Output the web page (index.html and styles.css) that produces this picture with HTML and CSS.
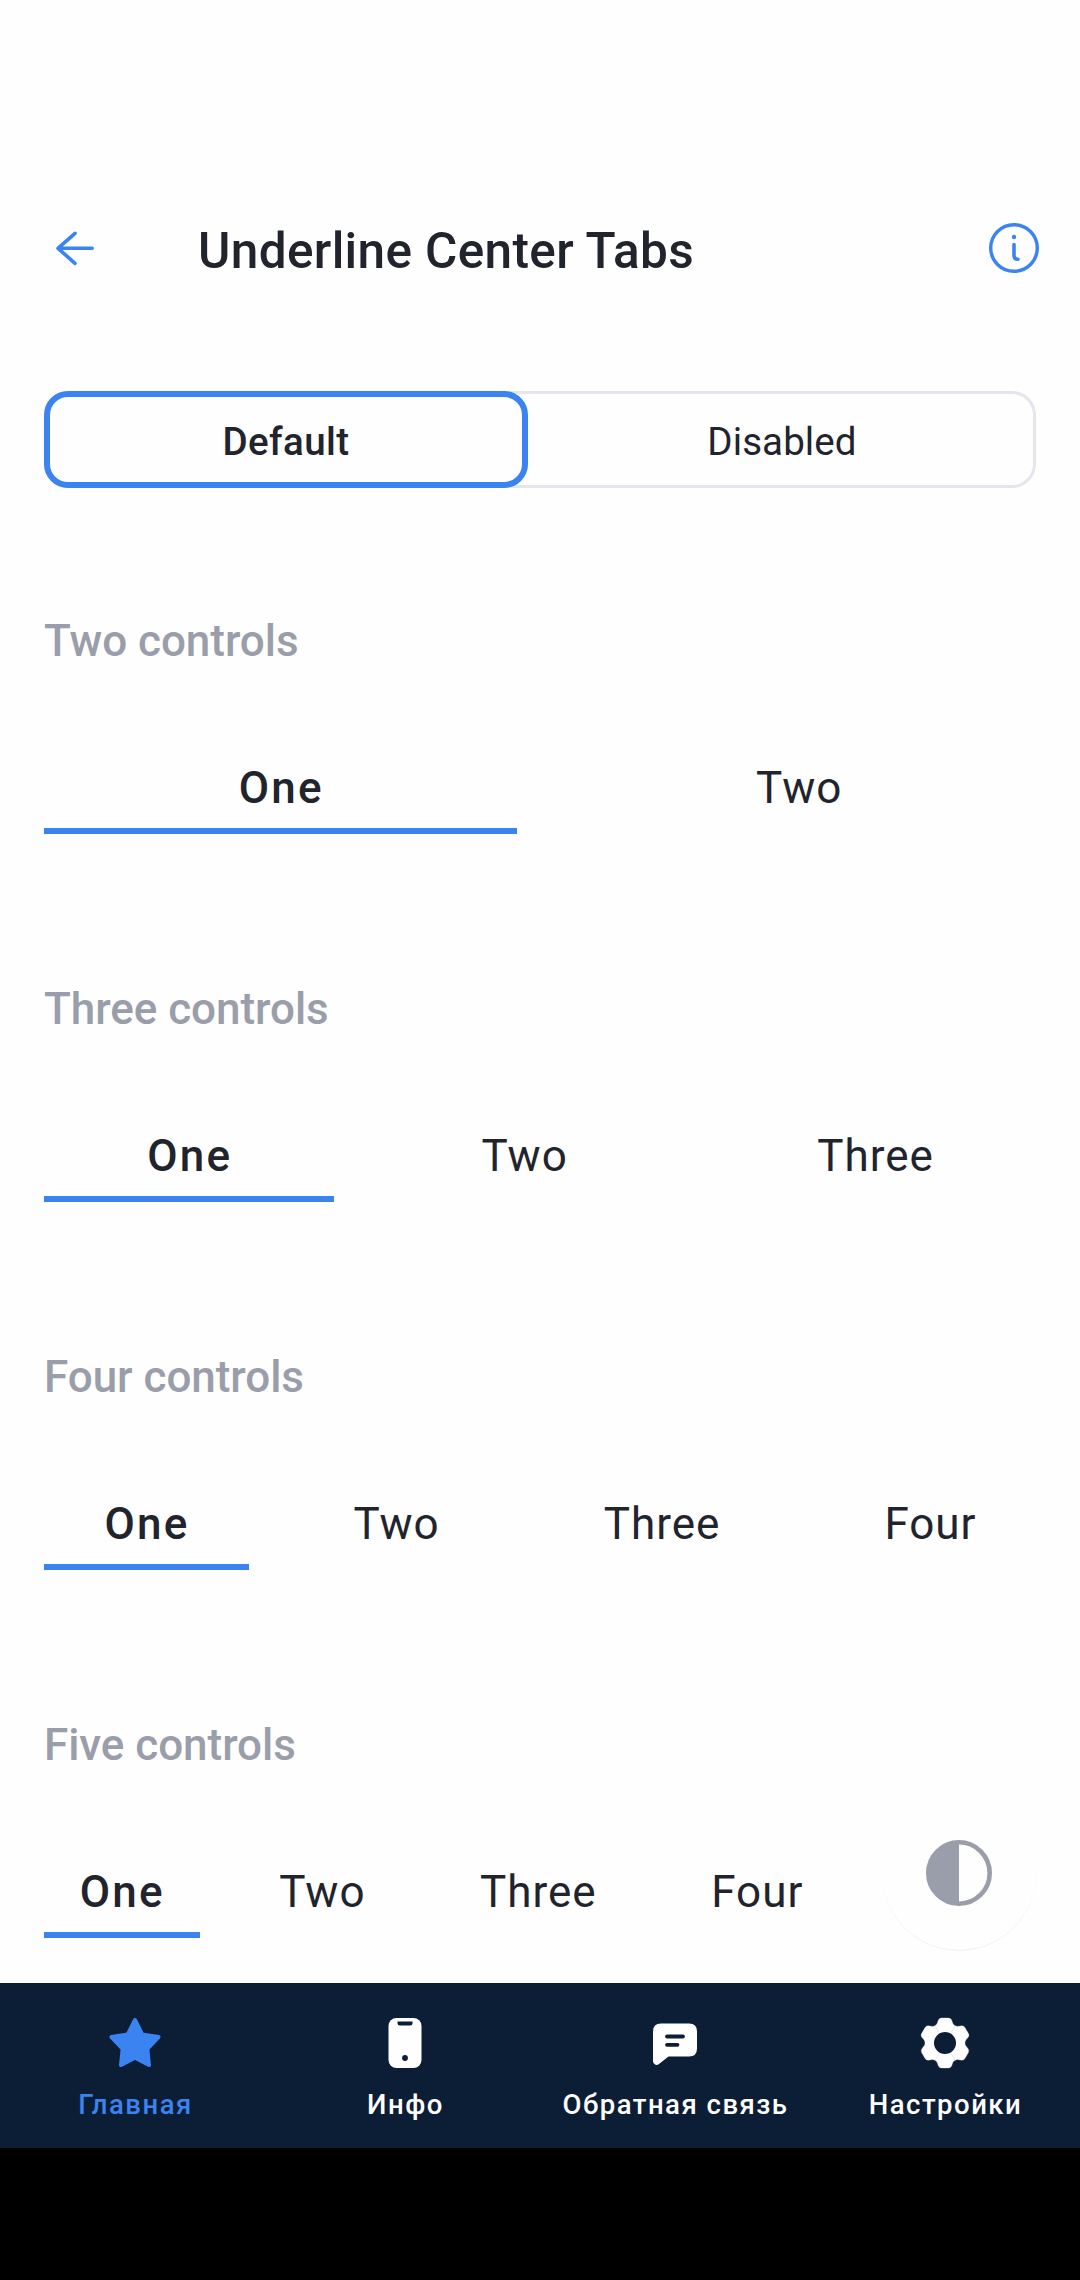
FILE: index.html
```html
<!DOCTYPE html>
<html lang="ru">
<head>
<meta charset="utf-8">
<title>Underline Center Tabs</title>
<link rel="stylesheet" href="styles.css">
</head>
<body>
<div class="screen">
  <header class="header">
    <svg class="back" viewBox="0 0 66 66"><path d="M50.200 33.300H17M33 18.300L16 33.300l17 15"/></svg>
    <h1 class="title">Underline Center Tabs</h1>
    <svg class="info" viewBox="0 0 66 66"><circle class="ring" cx="33" cy="33" r="23.300"/><circle class="dot" cx="33" cy="22" r="2.200"/><path d="M33 29.500V40.500Q33 44.200 37 44.200"/></svg>
  </header>
  <main class="content">
    <div class="segments">
      <div class="segment selected">Default</div>
      <div class="segment">Disabled</div>
    </div>
    <section class="group">
      <h2 class="caption">Two controls</h2>
      <div class="tabs"><div class="tab active">One</div><div class="tab">Two</div></div>
    </section>
    <section class="group">
      <h2 class="caption">Three controls</h2>
      <div class="tabs"><div class="tab active">One</div><div class="tab">Two</div><div class="tab">Three</div></div>
    </section>
    <section class="group">
      <h2 class="caption">Four controls</h2>
      <div class="tabs"><div class="tab active">One</div><div class="tab">Two</div><div class="tab">Three</div><div class="tab">Four</div></div>
    </section>
    <section class="group">
      <h2 class="caption">Five controls</h2>
      <div class="tabs"><div class="tab active">One</div><div class="tab">Two</div><div class="tab">Three</div><div class="tab">Four</div><div class="tab">Five</div></div>
    </section>
    <div class="theme">
      <svg class="theme-icon" viewBox="0 0 66 66"><circle cx="33" cy="33" r="30.700"/><path d="M33 2A31 31 0 0 0 33 64Z"/></svg>
    </div>
  </main>
  <nav class="nav">
    <div class="item current">
      <svg class="icon" viewBox="0 0 66 66"><path class="star" d="M33 10L40.200 24.500L56.500 27L45.300 38.800L47 55L33 47.700L19 55L20.700 38.800L9.500 27L25.800 24.500Z"/></svg>
      <span class="label">Главная</span>
    </div>
    <div class="item">
      <svg class="icon" viewBox="0 0 66 66"><rect x="16.500" y="8" width="33" height="50" rx="8"/><path class="hole" d="M25.500 11.500H40.500V13Q40.500 15.500 38 15.500H28Q25.500 15.500 25.500 13Z"/><circle class="hole" cx="33" cy="48" r="2.900"/></svg>
      <span class="label">Инфо</span>
    </div>
    <div class="item">
      <svg class="icon" viewBox="0 0 66 66"><path d="M19 13.500H47Q55 13.500 55 21.500V38.500Q55 46.500 47 46.500H26.500L17 54Q15 55.500 13 54.500Q11 53.500 11 51V21.500Q11 13.500 19 13.500Z"/><path class="line" d="M25 26.500H41M25 34.800H35.500"/></svg>
      <span class="label">Обратная связь</span>
    </div>
    <div class="item">
      <svg class="icon" viewBox="-33 -33 66 66">
        <defs><path id="tooth" d="M0 0L-10-17.300C-8-18.500-7.600-20-7-22Q-6-25-3.500-25H3.500Q6-25 7-22C7.600-20 8-18.500 10-17.300Z"/></defs>
        <g class="gear"><use href="#tooth"/><use href="#tooth" transform="rotate(60)"/><use href="#tooth" transform="rotate(120)"/><use href="#tooth" transform="rotate(180)"/><use href="#tooth" transform="rotate(240)"/><use href="#tooth" transform="rotate(300)"/></g>
        <circle class="hole" r="11"/>
      </svg>
      <span class="label">Настройки</span>
    </div>
  </nav>
  <div class="system"></div>
</div>
</body>
</html>
```
FILE: styles.css
```css
* { box-sizing: border-box; }
body { margin: 0; background: #fefefe; font-family: Roboto, sans-serif; color: #21242d; }
svg { display: block; flex: none; }
.screen { width: 1080px; height: 2280px; display: flex; flex-direction: column; overflow: hidden; }
.header { height: 314px; padding: 182px 33px 0 42px; display: flex; align-items: center; flex: none; }
.back, .info { width: 66px; height: 66px; fill: none; stroke: #3a83f1; stroke-width: 3.6px; stroke-linecap: round; stroke-linejoin: round; }
.back { margin-right: 90px; }
.info { margin-left: auto; }
.info .ring { stroke-width: 3.4px; }
.info .dot { fill: #3a83f1; stroke: none; }
.title { margin: 0; padding-top: 6px; font-size: 49.5px; line-height: 66px; font-weight: 500; letter-spacing: .36px; white-space: nowrap; }
.content { position: relative; flex: 1; padding: 77px 44px 0; min-height: 0; overflow: hidden; }
.segments { height: 97px; display: grid; grid-template-columns: 484px 1fr; border-radius: 24px; box-shadow: inset 0 0 0 3px #e3e6ed; }
.segment { display: flex; align-items: center; justify-content: center; font-size: 38.500px; line-height: 48px; padding-top: 5px; letter-spacing: .1px; }
.selected { border: 6px solid #3a83f1; border-radius: 24px; font-weight: 500; letter-spacing: .4px; }
.group { height: 368px; padding-top: 125px; }
.caption { margin: 0; font-size: 44px; line-height: 56px; font-weight: 500; letter-spacing: -.05px; color: #9a9eaa; }
.tabs { display: flex; gap: 44px; height: 100px; margin-top: 65px; }
.tab { flex: 1 1 auto; text-align: center; font-size: 44px; line-height: 56px; padding-top: 26px; letter-spacing: 1px; text-indent: 1px; }
.active { border-bottom: 6px solid #3a83f1; font-weight: 500; letter-spacing: 2.2px; }
.theme { position: absolute; right: 44px; bottom: 33px; width: 154px; height: 154px; border-radius: 50%; background: #fefefe; box-shadow: 0 1px 1px -0.500px rgba(0, 0, 0, .1); display: flex; align-items: center; justify-content: center; }
.theme-icon { width: 66px; height: 66px; fill: #9a9eaa; }
.theme-icon circle { fill: none; stroke: #9a9eaa; stroke-width: 4.6px; }
.nav { height: 165px; flex: none; display: grid; grid-template-columns: repeat(4, 270px); background: #0c1d36; color: #fefefe; }
.item { display: flex; flex-direction: column; align-items: center; padding-top: 27px; }
.icon { width: 66px; height: 66px; fill: currentColor; }
.star { stroke: currentColor; stroke-width: 4px; stroke-linejoin: round; }
.hole { fill: #0c1d36; }
.line { fill: none; stroke: #0c1d36; stroke-width: 3.800px; stroke-linecap: round; }
.gear { stroke: currentColor; stroke-width: .3px; }
.label { font-size: 27.500px; line-height: 36px; margin-top: 11px; padding-left: 1px; font-weight: 500; letter-spacing: 1.5px; white-space: nowrap; }
.current { color: #3a83f1; }
.system { height: 132px; flex: none; background: #000; }
```
